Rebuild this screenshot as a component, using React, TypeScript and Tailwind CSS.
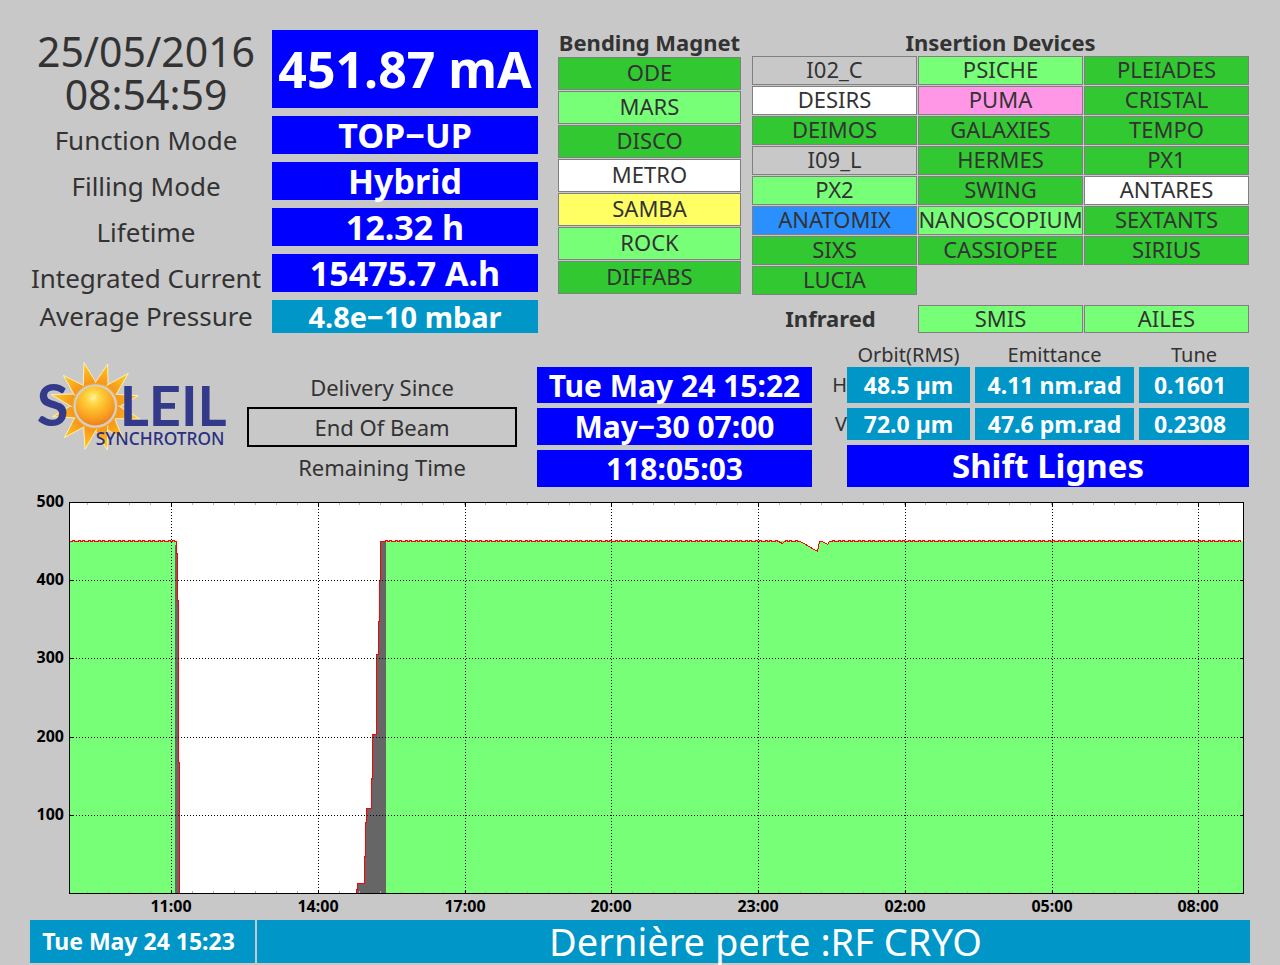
import { Fragment } from "react";

const machineStatus = [
  { label: "Function Mode", value: "TOP−UP" },
  { label: "Filling Mode", value: "Hybrid" },
  { label: "Lifetime", value: "12.32 h" },
  { label: "Integrated Current", value: "15475.7 A.h" },
];

const tone = {
  open: "bg-[#32c832]",
  ready: "bg-[#78ff78]",
  off: "bg-[#c8c8c8]",
  white: "bg-white",
  yellow: "bg-[#ffff64]",
  pink: "bg-[#ff96e6]",
  blue: "bg-[#2b90ff]",
};

type Beamline = [name: string, state: keyof typeof tone];

const bendingMagnets: Beamline[] = [
  ["ODE", "open"],
  ["MARS", "ready"],
  ["DISCO", "open"],
  ["METRO", "white"],
  ["SAMBA", "yellow"],
  ["ROCK", "ready"],
  ["DIFFABS", "open"],
];

const insertionDevices: Beamline[] = [
  ["I02_C", "off"],
  ["PSICHE", "ready"],
  ["PLEIADES", "open"],
  ["DESIRS", "white"],
  ["PUMA", "pink"],
  ["CRISTAL", "open"],
  ["DEIMOS", "open"],
  ["GALAXIES", "open"],
  ["TEMPO", "open"],
  ["I09_L", "off"],
  ["HERMES", "open"],
  ["PX1", "open"],
  ["PX2", "ready"],
  ["SWING", "open"],
  ["ANTARES", "white"],
  ["ANATOMIX", "blue"],
  ["NANOSCOPIUM", "ready"],
  ["SEXTANTS", "open"],
  ["SIXS", "open"],
  ["CASSIOPEE", "open"],
  ["SIRIUS", "open"],
  ["LUCIA", "open"],
];

const beamRows = [
  { axis: "H", height: "h-9", values: ["48.5 µm", "4.11 nm.rad", "0.1601"] },
  { axis: "V", height: "h-8", values: ["72.0 µm", "47.6 pm.rad", "0.2308"] },
];

function Tile({ line, height }: { line: Beamline; height: string }) {
  return (
    <li
      className={`flex min-w-0 items-center justify-center border border-[#808080] pb-[3px] text-[22px] leading-none whitespace-nowrap ${height} ${tone[line[1]]}`}
    >
      {line[0]}
    </li>
  );
}

function Logo() {
  const cx = 226;
  const cy = 168;
  const tips = [
    [192, 38], [263, 42], [325, 70], [355, 137], [360, 207], [312, 272],
    [262, 300], [195, 298], [133, 263], [98, 200], [94, 134], [130, 76],
  ];
  const ray = ([x, y]: number[]) => {
    const a = Math.atan2(y - cy, x - cx);
    const at = (d: number) => `${cx + 68 * Math.cos(a + d)},${cy + 68 * Math.sin(a + d)}`;
    return `${x},${y} ${at(0.31)} ${at(-0.31)}`;
  };

  return (
    <svg viewBox="30 15 630 300" className="w-full max-w-[210px]" role="img" aria-label="Soleil Synchrotron">
      <defs>
        <radialGradient id="ball" cx="0.45" cy="0.3" r="0.7">
          <stop offset="0" stopColor="#fff3a0" />
          <stop offset="0.25" stopColor="#ffd23a" />
          <stop offset="0.7" stopColor="#f9a020" />
          <stop offset="1" stopColor="#ee7a1c" />
        </radialGradient>
        <radialGradient id="rays" gradientUnits="userSpaceOnUse" cx="226" cy="168" r="140">
          <stop offset="0.4" stopColor="#f58a1c" />
          <stop offset="1" stopColor="#ffd21e" />
        </radialGradient>
      </defs>
      {tips.map((t) => (
        <polygon key={t.join()} points={ray(t)} fill="url(#rays)" stroke="#fff0b0" strokeWidth="3" />
      ))}
      <circle cx={cx} cy={cy} r="70" fill="#f9a01e" />
      <circle cx={cx} cy={cy} r="62" fill="url(#ball)" stroke="#d2cfc8" strokeWidth="7" />
      <g fill="#333a8a" fontFamily="Lato, sans-serif" fontWeight="700">
        <text x="50" y="229" fontSize="174">S</text>
        <text x="299" y="228" fontSize="168">LEIL</text>
      </g>
      <text x="227" y="286" fontSize="52" fill="#2b3080" fontFamily="'Noto Sans', sans-serif" fontWeight="500">
        SYNCHROTRON
      </text>
    </svg>
  );
}

// Plot area in chart units: x 69..1243, y 502 (500 mA) .. 893 (0 mA)
const hours = ["11:00", "14:00", "17:00", "20:00", "23:00", "02:00", "05:00", "08:00"];
const hourX = (i: number) => Math.round(171 + i * 146.75);
const levels = [
  { mA: 500, y: 502 },
  { mA: 400, y: 580 },
  { mA: 300, y: 658 },
  { mA: 200, y: 737 },
  { mA: 100, y: 815 },
];
const minorTicks = Array.from({ length: 55 }, (_, i) => Math.round(87 + i * 20.96)).filter((x) => x < 1243);

// Top-up injections make the current ripple by a fraction of a mA
function ripple(from: number, to: number) {
  let d = "";
  for (let x = from; x < to; x += 2) {
    d += `L${x},${(x * 7) % 10 < 4 ? 540 : 541}`;
  }
  return d;
}

const loss = "L176,541V553H177V600H178V762H179V893";
const refill =
  "M356,893V889H357V883H364V856H365V822H366V808H371V778H372V734H376V654H378V621H379V580H380V541";
const storedBeam =
  refill + ripple(382, 780) + "L782,543L784,541" + ripple(786, 800) +
  "L800,541L817,551L819,541L822,541L827,544L829,541" + ripple(831, 1243);

function CurrentChart() {
  return (
    <svg
      viewBox="30 497 1220 423"
      className="mt-[10px] block w-full overflow-visible"
      role="img"
      aria-label="Stored current over the last 24 hours"
      shapeRendering="crispEdges"
    >
      <rect x="69" y="502" width="1175" height="391" fill="#fff" />
      <path d="M69,541H176V893H69Z" fill="#78ff78" />
      <path d="M175,545H177V600H178V762H180V893H175Z" fill="#666" />
      <path d={refill + "H386V893Z"} fill="#666" />
      <path d="M386,541H799L817,551L819,541L828,544L829,541H1243V893H386Z" fill="#78ff78" />
      <g transform="translate(0.5 0.5)" fill="none">
        <path d={"M69,541" + ripple(71, 176) + loss} stroke="#f00" />
        <path d={storedBeam} stroke="#f00" />
        {levels.slice(1).map(({ y }) => (
          <path key={y} d={`M69,${y}H1243`} stroke="#000" strokeDasharray="1 2" />
        ))}
        {hours.map((h, i) => (
          <path key={h} d={`M${hourX(i)},502V893`} stroke="#000" strokeDasharray="1 2" />
        ))}
        {minorTicks.map((x) => (
          <path key={x} d={`M${x},502v2M${x},890v3`} stroke="#b4b4b4" />
        ))}
        {levels.map(({ y }) => (
          <path key={y} d={`M69,${y}h4M1243,${y}h-4`} stroke="#000" />
        ))}
        {hours.map((h, i) => (
          <path key={h} d={`M${hourX(i)},502v4M${hourX(i)},893v-4`} stroke="#000" />
        ))}
        <rect x="69" y="502" width="1174" height="391" stroke="#000" />
      </g>
      <g fill="#000" fontSize="16" fontWeight="700">
        {levels.map(({ mA, y }) => (
          <text key={mA} x="64" y={y + 5} textAnchor="end">{mA}</text>
        ))}
        {hours.map((h, i) => (
          <text key={h} x={hourX(i)} y="912" textAnchor="middle">{h}</text>
        ))}
      </g>
    </svg>
  );
}

export default function App() {
  return (
    <main className="min-h-screen bg-[#c8c8c8] px-[30px] pt-[30px] pb-[2px] font-['Noto_Sans','Open_Sans',sans-serif] text-[#333]">
      <div className="grid grid-cols-[528fr_183fr_508fr] pr-px">
        {/* Machine status */}
        <div className="mr-5 grid grid-cols-[232fr_266fr] content-start gap-x-[10px] gap-y-2 text-center whitespace-nowrap">
          <time className="h-[78px] text-[41px] leading-[43px]">
            25/05/2016
            <br />
            08:54:59
          </time>
          <output className="flex h-[78px] items-center justify-center bg-[#0000ff] text-[50px] leading-none font-bold text-white">
            451.87 mA
          </output>
          {machineStatus.map(({ label, value }) => (
            <Fragment key={label}>
              <span className="h-[38px] text-[26px] leading-[48px]">{label}</span>
              <output className="flex h-[38px] items-center justify-center bg-[#0000ff] text-[34px] leading-none font-bold text-white">
                {value}
              </output>
            </Fragment>
          ))}
          <span className="text-[26px] leading-8">Average Pressure</span>
          <output className="flex h-[33px] items-center justify-center bg-[#0096c8] text-[29px] leading-none font-bold text-white">
            4.8e−10 mbar
          </output>
        </div>

        <section>
          <h2 className="h-[27px] text-center text-[22px] leading-6 font-bold whitespace-nowrap">Bending Magnet</h2>
          <ul className="grid gap-px">
            {bendingMagnets.map((line) => (
              <Tile key={line[0]} line={line} height="h-[33px]" />
            ))}
          </ul>
        </section>

        <section className="ml-[11px]">
          <h2 className="h-[26px] text-center text-[22px] leading-6 font-bold">Insertion Devices</h2>
          <ul className="grid grid-cols-3 gap-px">
            {insertionDevices.map((line) => (
              <Tile key={line[0]} line={line} height="h-[29px]" />
            ))}
          </ul>
          <div className="mt-[10px] grid grid-cols-3 gap-px">
            <h2 className="pr-2 text-center text-[22px] leading-[26px] font-bold">Infrared</h2>
            <ul className="col-span-2 grid grid-cols-2 gap-px">
              <Tile line={["SMIS", "ready"]} height="h-7" />
              <Tile line={["AILES", "ready"]} height="h-7" />
            </ul>
          </div>
        </section>
      </div>

      <div className="mt-[10px] grid grid-cols-[217fr_290fr_275fr_437fr] whitespace-nowrap pr-px">
        <div className="pt-3">
          <Logo />
        </div>

        <div className="mr-5 pt-6 text-center text-[22px]">
          <p className="leading-10">Delivery Since</p>
          <p className="h-10 border-2 border-black leading-9">End Of Beam</p>
          <p className="leading-10">Remaining Time</p>
        </div>

        <div className="grid content-start gap-[5px] pt-6 text-center text-[30px] leading-[37px] font-bold text-white">
          <time className="h-9 bg-[#0000ff]">Tue May 24 15:22</time>
          <time className="bg-[#0000ff]">May−30 07:00</time>
          <time className="bg-[#0000ff]">118:05:03</time>
        </div>

        <div>
          <table className="grid grid-cols-[35fr_128fr_164fr_110fr] gap-y-[5px] text-center">
            <thead className="contents">
              <tr className="col-span-4 -mb-[5px] grid h-6 grid-cols-subgrid text-xl leading-6">
                <td />
                <th scope="col" className="mr-[5px] font-normal">Orbit(RMS)</th>
                <th scope="col" className="mr-[5px] font-normal">Emittance</th>
                <th scope="col" className="font-normal">Tune</th>
              </tr>
            </thead>
            <tbody className="contents">
              {beamRows.map(({ axis, height, values }) => (
                <tr key={axis} className={`col-span-4 grid grid-cols-subgrid items-center text-[23px] leading-none ${height}`}>
                  <th scope="row" className="text-right text-xl font-normal">{axis}</th>
                  {values.map((v) => (
                    <td key={v} className="mr-[5px] flex h-full items-center justify-center bg-[#0096c8] font-bold text-white last:mr-0 last:pr-2">
                      {v}
                    </td>
                  ))}
                </tr>
              ))}
            </tbody>
          </table>
          <p className="mt-[5px] ml-[35px] h-[42px] bg-[#0000ff] text-center text-[33px] leading-[42px] font-bold text-white">
            Shift Lignes
          </p>
        </div>
      </div>

      <CurrentChart />

      <footer className="grid h-[43px] grid-cols-[225fr_993fr] gap-[2px] text-center leading-[43px] whitespace-nowrap text-white">
        <time className="bg-[#0096c8] pr-2 text-[23px] font-bold">Tue May 24 15:23</time>
        <p className="bg-[#0096c8] pl-6 text-[38px]">Dernière perte :RF CRYO</p>
      </footer>
    </main>
  );
}
